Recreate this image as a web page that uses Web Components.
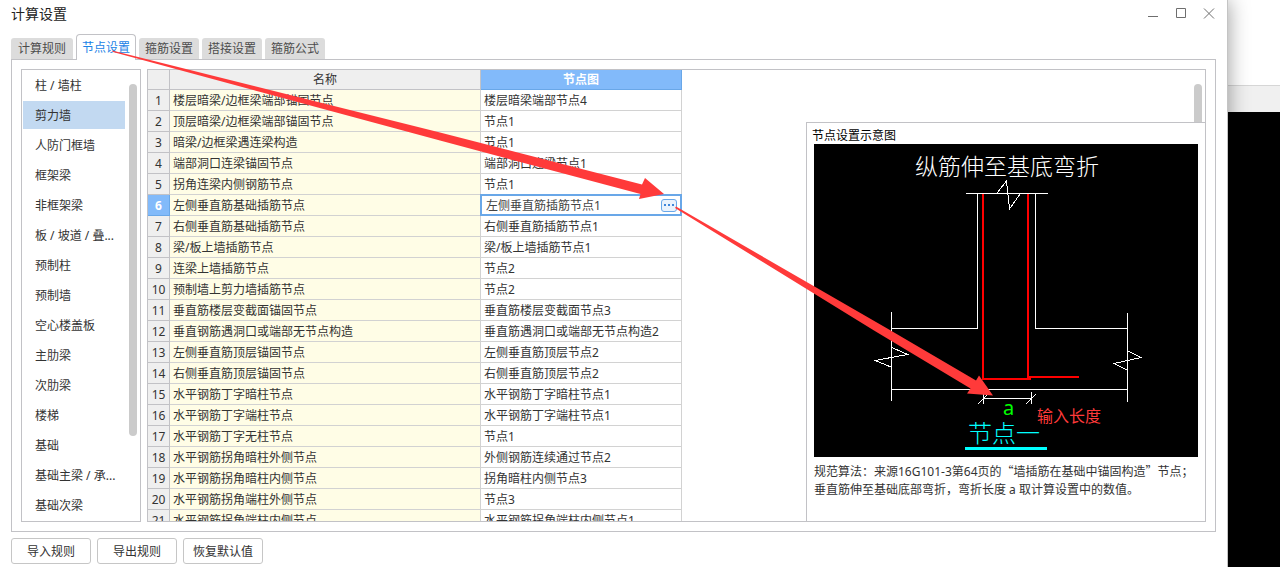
<!DOCTYPE html>
<html lang="zh-CN">
<head>
<meta charset="utf-8">
<meta name="viewport" content="width=device-width, initial-scale=1">
<title>计算设置</title>
<style>
  html, body { margin: 0; height: 100%; }
  body {
    display: flex;
    position: relative;
    overflow: hidden;
    background: #fff;
    color: #333;
    font: 12px/18px "Noto Sans", "Noto Sans CJK SC", sans-serif;
    --line: #c2c2c6;
    --accent: #82bafa;
    --accent-line: #69a7e8;
  }
</style>
</head>
<body>
<settings-dialog>
  <window-bar slot="bar">计算设置</window-bar>
  <tab-strip slot="tabs"></tab-strip>
  <component-list></component-list>
  <grid-pane>
    <node-grid></node-grid>
    <node-preview slot="side"></node-preview>
  </grid-pane>
  <push-button slot="actions">导入规则</push-button>
  <push-button slot="actions">导出规则</push-button>
  <push-button slot="actions">恢复默认值</push-button>
</settings-dialog>
<back-window></back-window>
<guide-arrows></guide-arrows>

<script>
const define = (name, html, setup) => customElements.define(name, class extends HTMLElement {
  constructor() {
    super();
    const t = document.createElement('template');
    t.innerHTML = '<style>*{box-sizing:border-box}button,input{font:inherit;color:inherit;margin:0}</style>' + html;
    this.attachShadow({ mode: 'open' }).append(t.content.cloneNode(true));
    if (setup) setup(this.shadowRoot);
  }
});

define('settings-dialog', `
<style>
  :host { display: flex; flex-direction: column; flex: 1; min-width: 0; height: 100vh; box-sizing: border-box;
    background: #fff; border-right: 1px solid #c4c4c4; box-shadow: 0 0 20px rgba(0,0,0,.4); position: relative; z-index: 1; }
  main { flex: 1; min-height: 0; display: flex; gap: 6px; margin: 0 11px; padding: 9px; border: 1px solid var(--line); }
  footer { display: flex; gap: 6px; padding: 6px 11px 3px; }
</style>
<slot name="bar"></slot>
<slot name="tabs"></slot>
<main><slot></slot></main>
<footer><slot name="actions"></slot></footer>`);

define('window-bar', `
<style>
  :host { display: flex; justify-content: space-between; align-items: center; height: 28px; padding: 0 4px 0 11px; font-size: 14px; color: #222; }
  div { display: flex; }
  button { width: 28px; height: 28px; padding: 0; border: 0; background: none; display: grid; place-items: center; }
  svg { width: 12px; height: 12px; fill: none; stroke: #6e6e6e; }
</style>
<span><slot></slot></span>
<div>
  <button aria-label="最小化"><svg viewBox="0 0 12 12"><path d="M1 8.500H11"/></svg></button>
  <button aria-label="最大化"><svg viewBox="0 0 12 12"><path d="M1.500 .5H10.500V9.500H1.500Z"/></svg></button>
  <button aria-label="关闭"><svg viewBox="0 0 12 12"><path d="M1 .5L11 10.500M11 .5L1 10.500"/></svg></button>
</div>`);

define('tab-strip', `
<style>
  :host { display: block; position: relative; z-index: 1; margin: 0 11px -1px; }
  nav { display: flex; gap: 3px; align-items: flex-end; height: 32px; }
  button { height: 21px; margin-bottom: 1px; padding: 0 6px; border: 0; border-radius: 3px 3px 0 0; background: #dcdcdc; color: #4c4c4c; line-height: 20px; }
  button:first-child { padding: 0 7px; }
  button[aria-selected=true] { height: 26px; margin: 0; padding: 0 5px; border: 1px solid var(--line); border-bottom: 0; border-radius: 4px 4px 0 0; background: #fff; color: #1a82e6; }
</style>
<nav role="tablist">
  <button role="tab">计算规则</button>
  <button role="tab" aria-selected="true">节点设置</button>
  <button role="tab">箍筋设置</button>
  <button role="tab">搭接设置</button>
  <button role="tab">箍筋公式</button>
</nav>`);

define('component-list', `
<style>
  :host { display: flex; justify-content: space-between; flex: none; width: 120px; box-sizing: border-box; border: 1px solid var(--line); overflow: hidden; }
  ul { list-style: none; margin: 0; padding: 0 0 0 1px; }
  li { height: 30px; padding: 1px 0; }
  button { width: 102px; height: 28px; padding: 2px 0 0 12px; border: 0; background: none; text-align: left; white-space: nowrap; }
  [aria-current] { background: #c2d9f1; }
  i { width: 8px; height: 352px; margin: 14px 3px 0 0; border-radius: 4px; background: #cbcbcb; }
</style>
<ul></ul><i></i>`, root => {
  const names = ['柱 / 墙柱', '剪力墙', '人防门框墙', '框架梁', '非框架梁', '板 / 坡道 / 叠...', '预制柱', '预制墙',
    '空心楼盖板', '主肋梁', '次肋梁', '楼梯', '基础', '基础主梁 / 承...', '基础次梁'];
  root.querySelector('ul').innerHTML = names.map((n, i) =>
    `<li><button${i === 1 ? ' aria-current="true"' : ''}>${n}</button></li>`).join('');
});

define('grid-pane', `
<style>
  :host { display: flex; flex: 1; min-width: 0; box-sizing: border-box; border: 1px solid var(--line); overflow: hidden; }
  aside { flex: 1; display: flex; flex-direction: column; align-items: flex-end; }
  i { flex: none; width: 8px; height: 38px; margin: 14px 3px 0 0; border-radius: 4px 4px 0 0; background: #cbcbcb; }
  slot[name=side] { display: contents; }
</style>
<slot></slot>
<aside><i></i><slot name="side"></slot></aside>`);

define('node-grid', `
<style>
  :host { display: block; flex: none; }
  table { table-layout: fixed; width: 534px; border-collapse: separate; border-spacing: 0; }
  col:nth-child(1) { width: 22px; }
  col:nth-child(2) { width: 311px; }
  th, td { height: 21px; padding: 2px 0 0 3px; border: solid #d2d2d2; border-width: 0 1px 1px 0; line-height: 18px; text-align: left; font-weight: 400; white-space: nowrap; }
  thead th { height: 20px; padding: 1px 0 0; text-align: center; background: #efefef; border-color: var(--line); }
  thead th:last-child, tr.on th { background: var(--accent); border-color: var(--accent-line); color: #fff; font-weight: 700; }
  tbody th { padding: 2px 0 0; text-align: center; background: #efefef; border-color: var(--line); }
  td:nth-child(2) { background: #fffde6; }
  td.edit { padding: 0; }
  label { display: flex; align-items: center; position: relative; height: 22px; margin: -1px; padding: 0 3px 0 4px; border: 2px solid var(--accent-line); background: #fff; }
  input { flex: 1; min-width: 0; height: 18px; padding: 2px 0 0; border: 0; outline: 0; background: none; color: #444; }
  label button { width: 16px; height: 13px; padding: 0; border: 1px solid var(--accent-line); border-radius: 3px; background: #eaf2fc; display: grid; place-items: center; }
  svg { width: 10px; height: 2px; fill: #3f86da; }
</style>
<table>
  <colgroup><col><col><col></colgroup>
  <thead><tr><th></th><th>名称</th><th>节点图</th></tr></thead>
  <tbody></tbody>
</table>`, root => {
  const rows = [
    ['楼层暗梁/边框梁端部锚固节点', '楼层暗梁端部节点4'],
    ['顶层暗梁/边框梁端部锚固节点', '节点1'],
    ['暗梁/边框梁遇连梁构造', '节点1'],
    ['端部洞口连梁锚固节点', '端部洞口连梁节点1'],
    ['拐角连梁内侧钢筋节点', '节点1'],
    ['左侧垂直筋基础插筋节点', '左侧垂直筋插筋节点1'],
    ['右侧垂直筋基础插筋节点', '右侧垂直筋插筋节点1'],
    ['梁/板上墙插筋节点', '梁/板上墙插筋节点1'],
    ['连梁上墙插筋节点', '节点2'],
    ['预制墙上剪力墙插筋节点', '节点2'],
    ['垂直筋楼层变截面锚固节点', '垂直筋楼层变截面节点3'],
    ['垂直钢筋遇洞口或端部无节点构造', '垂直筋遇洞口或端部无节点构造2'],
    ['左侧垂直筋顶层锚固节点', '左侧垂直筋顶层节点2'],
    ['右侧垂直筋顶层锚固节点', '右侧垂直筋顶层节点2'],
    ['水平钢筋丁字暗柱节点', '水平钢筋丁字暗柱节点1'],
    ['水平钢筋丁字端柱节点', '水平钢筋丁字端柱节点1'],
    ['水平钢筋丁字无柱节点', '节点1'],
    ['水平钢筋拐角暗柱外侧节点', '外侧钢筋连续通过节点2'],
    ['水平钢筋拐角暗柱内侧节点', '拐角暗柱内侧节点3'],
    ['水平钢筋拐角端柱外侧节点', '节点3'],
    ['水平钢筋拐角端柱内侧节点', '水平钢筋拐角端柱内侧节点1']
  ];
  const editor = v => `<td class="edit"><label><input aria-label="节点图" value="${v}"><button aria-label="选择节点"><svg viewBox="0 0 10 2"><path d="M0 0h2v2H0zM4 0h2v2H4zM8 0h2v2H8z"/></svg></button></label></td>`;
  root.querySelector('tbody').innerHTML = rows.map(([a, b], i) =>
    `<tr${i === 5 ? ' class="on"' : ''}><th>${i + 1}</th><td>${a}</td>${i === 5 ? editor(b) : `<td>${b}</td>`}</tr>`).join('');
});

define('node-preview', `
<style>
  :host { display: block; flex: 1; width: 399px; box-sizing: border-box; border: solid var(--line); border-width: 1px 0 0 1px; background: #fff; }
  h2 { margin: 0; padding: 4px 0 0 5px; height: 21px; box-sizing: border-box; font-size: 12px; line-height: 18px; font-weight: 400; color: #000; }
  figure { margin: 0; padding: 0 7px; }
  figcaption { margin-top: 5px; white-space: nowrap; }
  q { quotes: none; font-family: "Noto Sans CJK SC", sans-serif; }
</style>
<h2>节点设置示意图</h2>
<figure>
  <node-drawing></node-drawing>
  <figcaption>规范算法：来源16G101-3第64页的<q>“墙插筋在基础中锚固构造”</q>节点；<br>垂直筋伸至基础底部弯折，弯折长度 a 取计算设置中的数值。</figcaption>
</figure>`);

define('node-drawing', `
<style>
  :host { display: block; background: #000; }
  svg { display: block; width: 100%; }
  path { fill: none; shape-rendering: crispEdges; }
  text { font-family: "Noto Sans CJK SC", sans-serif; font-weight: 300; }
  .dim { font-family: "Noto Sans", sans-serif; font-weight: 400; }
  .hint { font-weight: 400; }
</style>
<svg viewBox="814 144 384 313" role="img" aria-label="节点一">
  <path stroke="#fff" d="M966 193.500H1048M977.500 194V328.500H891M1035.500 194V328.500H1127M891.500 312V401M1127.500 313V402M891 389.500H1127
    M997 193L1006.500 181L1009.500 209L1020 194M892 347.500L907.500 354.500L875 360.500L891 367M1128 351L1141 357.500L1114 363.500L1127 370
    M983 398.500H1032M983.500 392V404M1031.500 392V404M978 404L988 394M1026 404L1036 394"/>
  <path stroke="#f00" stroke-width="2" d="M983 194V379H1031M1028 194V377H1079"/>
  <path stroke="#0ff" stroke-width="3" d="M965 448.500H1047"/>
  <text x="915" y="175" font-size="23" fill="#fff">纵筋伸至基底弯折</text>
  <text class="dim" x="1003" y="415" font-size="20" fill="#0f0">a</text>
  <text x="968" y="442" font-size="24" fill="#0ff">节点一</text>
  <text class="hint" x="1037" y="422" font-size="16" fill="#ff3a3a">输入长度</text>
</svg>`);

define('push-button', `
<style>
  :host { display: block; }
  button { min-width: 80px; height: 26px; padding: 2px 8px 0; border: 1px solid #c6c6c6; border-radius: 3px; background: #fff; }
</style>
<button><slot></slot></button>`);

define('back-window', `
<style>
  :host { display: flex; flex-direction: column; flex: none; width: 52px; background: #000; }
  div { height: 86px; box-sizing: border-box; background: #fff; border-bottom: 1px solid #d6d6d6; }
  p { height: 26px; margin: 0; background: #f0f0f0; }
</style>
<div></div><p></p>`);

define('guide-arrows', `
<style>
  :host { position: absolute; left: 0; top: 0; z-index: 2; pointer-events: none; }
  svg { display: block; fill: #ff3a3a; }
</style>
<svg width="1000" height="400" viewBox="0 0 1000 400" aria-hidden="true">
  <path d="M112 50.500L440 132.500L642 184.500L645 178L664 194L639 199L640.500 194L440 140.500L113 52Z"/>
  <path d="M676 206.500L889 329.500L976 380.500L979 375.500L993 395.500L967 393.500L970.500 388.500L874 330.500L675 208Z"/>
</svg>`);
</script>
</body>
</html>
